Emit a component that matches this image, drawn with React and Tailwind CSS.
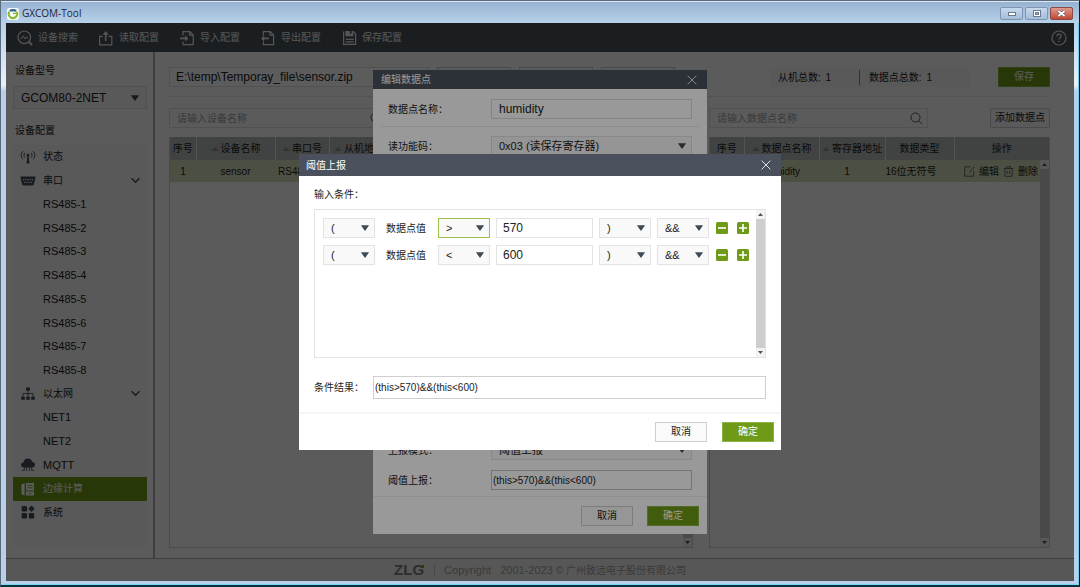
import React from "react";

/* ---------- icons ---------- */

function Svg({ children, size = 16, className = "", sw = 1.2 }) {
  return (
    <svg
      width={size}
      height={size}
      viewBox="0 0 16 16"
      fill="none"
      stroke="currentColor"
      strokeWidth={sw}
      className={"shrink-0 " + className}
      aria-hidden="true"
    >
      {children}
    </svg>
  );
}

const ScanIcon = () => (
  <Svg>
    <circle cx="7.3" cy="7.3" r="6.3" />
    <path d="M12 12l3 3" strokeWidth="1.8" />
    <path d="M3.4 8.2h1.5L6.2 5.8l2 3.2 1.4-2.2 0.6 0.9h1" strokeWidth="1" />
  </Svg>
);
const ReadIcon = () => (
  <Svg>
    <path d="M4.8 6.3H1.6v8.6h12.2V6.3h-3.2" />
    <path d="M7.7 11V2.4" strokeWidth="1.6" />
    <path d="M4.7 4.8L7.7 1l3 3.8z" fill="currentColor" stroke="none" />
  </Svg>
);
const ImportIcon = () => (
  <Svg>
    <path d="M4 5.4V1.6h6.8l3.4 3.4v9.6H4v-3.2" />
    <path d="M10.6 1.6v3.6h3.6" />
    <path d="M1 8.4h6" strokeWidth="1.8" />
    <path d="M6.2 5.4l3.2 3-3.2 3z" fill="currentColor" stroke="none" />
  </Svg>
);
const ExportIcon = () => (
  <Svg>
    <path d="M3.4 5.4V1.6h6.8l3.4 3.4v9.6H3.4v-3.2" />
    <path d="M10 1.6v3.6h3.6" />
    <path d="M3.4 8.4h5.4" strokeWidth="1.8" />
    <path d="M4.2 5.4L1 8.4l3.2 3z" fill="currentColor" stroke="none" />
  </Svg>
);
const SaveIcon = () => (
  <Svg>
    <path d="M2.6 1.6v12.8h12V3.8l-2-2.2" />
    <path d="M4.4 1v5.2h8V1h-1.8v2.8H8.8V1z" fill="currentColor" stroke="none" />
    <path d="M4.8 9.4h8M4.8 11.8h8" />
  </Svg>
);
const HelpIcon = () => (
  <Svg>
    <circle cx="8" cy="8" r="7" />
    <path d="M5.9 6.2c0-2.8 4.3-2.7 4.3-0.2 0 1.5-2.1 1.7-2.1 3.5" />
    <path d="M8.1 10.7v1.4" strokeWidth="1.4" />
  </Svg>
);
const SearchIcon = () => (
  <Svg size={13} sw={1.2} className="text-[#555]">
    <circle cx="6.8" cy="6.8" r="5.6" />
    <path d="M11 11l4 4" />
  </Svg>
);
const CloseIcon = () => (
  <Svg size={10} sw={1.3}>
    <path d="M1 1l14 14M15 1L1 15" />
  </Svg>
);
const StatusIcon = () => (
  <Svg sw={1}>
    <path d="M3 2.2C0.6 4.4 0.6 8 3 10.2M5 3.8C3.6 5 3.6 7.4 5 8.6M13 2.2c2.4 2.2 2.4 5.8 0 8M11 3.8c1.4 1.2 1.4 3.6 0 4.8" />
    <circle cx="8" cy="6.2" r="1.4" fill="currentColor" stroke="none" />
    <path d="M7.4 7h1.2l0.9 7.6h-3z" fill="currentColor" stroke="none" />
  </Svg>
);
const SerialIcon = () => (
  <Svg>
    <path d="M0.6 3.4h14.8v2l-1.6 6.2q-0.3 1-1.4 1H3.6q-1.1 0-1.4-1L0.6 5.4z" fill="currentColor" stroke="none" />
    <path d="M3 6.6h10M4 9.4h8" stroke="#f7f7f7" strokeDasharray="1.2 1" strokeWidth="1.3" />
  </Svg>
);
const NetIcon = () => (
  <Svg>
    <path d="M6 1.6h4v3.2H6zM1.2 10.8h3.6v3H1.2zM6.2 10.8h3.6v3H6.2zM11.2 10.8h3.6v3h-3.6z" fill="currentColor" stroke="none" />
    <path d="M8 4.6v6.4M3 11V7.6h10V11" strokeWidth="0.9" />
  </Svg>
);
const CloudIcon = () => (
  <Svg>
    <path d="M4 10.4C0 10.2 0.2 5.6 3.4 5.4 3.8 0.6 11.4 0 12.2 5c3.6 0 3.8 5.2 0.4 5.4z" fill="currentColor" stroke="none" />
    <path d="M6.6 10v4M9.4 10v4M4.4 10v3.4H1.8M11.6 10v3.4h2.6" strokeWidth="0.8" />
  </Svg>
);
const EdgeIcon = () => (
  <Svg>
    <path d="M1.4 3.6L4.6 2v12.6l-3.2-1.4z" fill="currentColor" stroke="none" />
    <path d="M6 2h8v7.4H6zM6 10.6h8v4H6z" fill="currentColor" stroke="none" />
    <path d="M7.4 4.4h5.2M7.4 6.8h5.2M9 12.6h2" stroke="#6f9a18" strokeWidth="0.9" />
  </Svg>
);
const SystemIcon = () => (
  <Svg>
    <rect x="1.6" y="2" width="5.4" height="5.4" rx="1" fill="currentColor" stroke="none" />
    <rect x="1.6" y="9" width="5.4" height="5.4" rx="1" fill="currentColor" stroke="none" />
    <rect x="8.8" y="9" width="5.4" height="5.4" rx="1" fill="currentColor" stroke="none" />
    <path d="M11.5 1.6l3.2 3.2-3.2 3.2-3.2-3.2z" fill="currentColor" stroke="none" />
  </Svg>
);
const EditIcon = () => (
  <Svg size={11} sw={1.2} className="text-[#555]">
    <path d="M9.5 1.2H1v13.6h13V7" />
    <path d="M14.8 1.2L8 9.5" />
  </Svg>
);
const TrashIcon = () => (
  <Svg size={11} sw={1.2} className="text-[#555]">
    <path d="M1 3.6h14M5.2 3.6V1h5.6v2.6M2.8 3.6v11.4h10.4V3.6M6.4 7v4.6M9.6 7v4.6" />
  </Svg>
);
const Chevron = () => (
  <Svg size={9} sw={2.4} className="ml-auto mr-[7px] text-[#434d57]">
    <path d="M1 4l7 7 7-7" />
  </Svg>
);
const Caret = () => (
  <svg width="8" height="6" viewBox="0 0 8 6" aria-hidden="true">
    <path d="M0.4 0.2h7.2q0.5 0 0.2 0.5L4.4 5.4q-0.4 0.5-0.8 0L0.2 0.7q-0.3-0.5 0.2-0.5z" fill="#3f4a54" />
  </svg>
);
const SortUp = () => (
  <svg width="8" height="4" viewBox="0 0 8 4" className="shrink-0" aria-hidden="true">
    <path d="M0 4L4 0l4 4z" fill="#8a9190" />
  </svg>
);

function AppLogo() {
  return (
    <svg width="12" height="12" viewBox="0 0 12 12" aria-hidden="true">
      <rect width="12" height="12" rx="2" fill="#f4f8fb" />
      <path d="M2.4 3.6A4.2 4.2 0 1 0 9.6 3.8" fill="none" stroke="#8cb82c" strokeWidth="2" />
      <path d="M2.2 2Q6 0 9.8 2L8.6 3.8Q6 2.8 3.6 3.8z" fill="#2f6482" />
      <path d="M6 5.4h3.8" stroke="#8cb82c" strokeWidth="1.3" />
    </svg>
  );
}

/* ---------- controls ---------- */

function Select({ id, label, value, className = "", active = false }) {
  return (
    <div className={"relative h-5 " + className}>
      <select
        id={id}
        aria-label={label}
        defaultValue={value}
        className={
          "block h-full w-full appearance-none border bg-[#f9f9f9] pl-[7px] pr-4 outline-none " +
          (active ? "border-[#9cc04c]" : "border-[#e3e3e3]")
        }
      >
        <option>{value}</option>
      </select>
      <div className="pointer-events-none absolute inset-y-0 right-1.5 flex items-center">
        <Caret />
      </div>
    </div>
  );
}

function Button({ primary = false, className = "", children }) {
  return (
    <button
      type="button"
      className={
        "h-5 shrink-0 border text-[10px] leading-none " +
        (primary ? "border-[#8db344] bg-[#6f9a18] text-white " : "border-[#cfcfcf] bg-[#fafafa] text-[#222] ") +
        className
      }
    >
      {children}
    </button>
  );
}

function ScrollBar() {
  return (
    <div className="flex w-[9px] shrink-0 flex-col bg-[#cecece]">
      <div className="flex h-[9px] items-center justify-center bg-[#f3f3f3]">
        <svg width="5" height="3" viewBox="0 0 5 3"><path d="M0 3L2.5 0 5 3z" fill="#555" /></svg>
      </div>
      <div className="flex-1" />
      <div className="flex h-[9px] items-center justify-center bg-[#f3f3f3]">
        <svg width="5" height="3" viewBox="0 0 5 3"><path d="M0 0L2.5 3 5 0z" fill="#555" /></svg>
      </div>
    </div>
  );
}

function DialogHeader({ title, className }) {
  return (
    <header className={"flex shrink-0 items-center justify-between bg-[#4a515c] text-white " + className}>
      <h2>{title}</h2>
      <button type="button" aria-label="关闭" className="flex">
        <CloseIcon />
      </button>
    </header>
  );
}

/* ---------- page ---------- */

const tools = [
  ["设备搜索", ScanIcon],
  ["读取配置", ReadIcon],
  ["导入配置", ImportIcon],
  ["导出配置", ExportIcon],
  ["保存配置", SaveIcon],
];

const nav = [
  { text: "状态", icon: StatusIcon },
  { text: "串口", icon: SerialIcon, open: true },
  { text: "RS485-1" },
  { text: "RS485-2" },
  { text: "RS485-3" },
  { text: "RS485-4" },
  { text: "RS485-5" },
  { text: "RS485-6" },
  { text: "RS485-7" },
  { text: "RS485-8" },
  { text: "以太网", icon: NetIcon, open: true },
  { text: "NET1" },
  { text: "NET2" },
  { text: "MQTT", icon: CloudIcon },
  { text: "边缘计算", icon: EdgeIcon, current: true },
  { text: "系统", icon: SystemIcon },
];

function Sidebar() {
  return (
    <aside className="flex w-[149px] shrink-0 flex-col border-r-2 border-[#b0b0b0] pb-[10px] pl-[7px] pr-1.5 pt-[13px]">
      <label htmlFor="model" className="pl-0.5 leading-3">设备型号</label>
      <div className="relative mt-[9px] h-[23px]">
        <select
          id="model"
          defaultValue="GCOM80-2NET"
          className="block h-full w-full appearance-none border border-[#e3e3e3] bg-[#f9f9f9] pl-[7px] text-[12px]"
        >
          <option>GCOM80-2NET</option>
        </select>
        <div className="pointer-events-none absolute inset-y-0 right-2 flex items-center">
          <Caret />
        </div>
      </div>
      <h2 className="mt-4 pl-0.5 leading-3">设备配置</h2>
      <nav className="mt-2 grid min-h-0 flex-1 grid-rows-[repeat(17,minmax(0,1fr))] bg-[#f7f7f7]">
        {nav.map(({ text, icon: Icon, open, current }) => (
          <a
            key={text}
            href="#"
            className={
              "flex items-center gap-[7px] pl-[7px] " +
              (current ? "bg-[#6f9a18] text-white" : "text-[#222]") +
              (/^[A-Z]/.test(text) ? " text-[11px]" : "")
            }
          >
            <span className={"flex w-4 " + (current ? "" : "text-[#434d57]")}>{Icon && <Icon />}</span>
            {text}
            {open && <Chevron />}
          </a>
        ))}
      </nav>
    </aside>
  );
}

function SearchBox({ id, placeholder, className = "" }) {
  return (
    <div className={"flex h-5 w-[219px] items-center border border-[#e3e3e3] pl-[7px] pr-1 " + className}>
      <input id={id} aria-label={placeholder} placeholder={placeholder} className="min-w-0 flex-1 outline-none placeholder:text-[#a3a3a3]" />
      <SearchIcon />
    </div>
  );
}

function Th({ children, sort, className = "" }) {
  return (
    <th className={"h-[23px] border-r border-[#e8e8e8] p-0 font-normal last:border-r-0 " + className}>
      <span className="flex items-center justify-center gap-0.5 whitespace-nowrap">
        {sort && <SortUp />}
        {children}
      </span>
    </th>
  );
}

function LeftPanel() {
  return (
    <section className="flex min-w-0 flex-[524] flex-col gap-[9px]">
      <div className="flex items-center justify-between">
        <SearchBox id="find-device" placeholder="请输入设备名称" />
        <Button className="w-[60px]">添加设备</Button>
      </div>
      <div className="flex min-h-0 flex-1 flex-col border border-t-0 border-[#d2d2d2]">
        <table className="w-full table-fixed border-collapse text-center">
          <thead className="bg-[#b4bcba]">
            <tr>
              <Th className="w-[26px]">序号</Th>
              <Th sort className="w-[79px]">设备名称</Th>
              <Th sort className="w-[54px]">串口号</Th>
              <Th sort className="w-[60px]">从机地址</Th>
              <Th>操作</Th>
            </tr>
          </thead>
          <tbody>
            <tr className="h-[22px] bg-[#d3dfb9]">
              <td className="p-0">1</td>
              <td className="p-0">sensor</td>
              <td className="p-0 pl-[3px] text-left">RS485-1</td>
              <td className="p-0">1</td>
              <td className="p-0" />
            </tr>
          </tbody>
        </table>
        <div className="flex min-h-0 flex-1 justify-end">
          <ScrollBar />
        </div>
      </div>
    </section>
  );
}

function RightPanel() {
  return (
    <section className="flex min-w-0 flex-[341] flex-col gap-[9px]">
      <div className="flex items-center justify-between">
        <SearchBox id="find-point" placeholder="请输入数据点名称" />
        <Button className="w-[60px]">添加数据点</Button>
      </div>
      <div className="flex min-h-0 flex-1 flex-col border border-t-0 border-[#d2d2d2]">
        <table className="w-full table-fixed border-collapse text-center">
          <thead className="bg-[#b4bcba]">
            <tr>
              <Th className="w-[34px]">序号</Th>
              <Th sort className="w-[75px]">数据点名称</Th>
              <Th sort className="w-[66px]">寄存器地址</Th>
              <Th className="w-[69px]">数据类型</Th>
              <Th>操作</Th>
            </tr>
          </thead>
        </table>
        <div className="flex min-h-0 flex-1">
          <div className="flex-1">
            <table className="w-full table-fixed border-collapse text-center">
              <tbody>
                <tr className="h-[22px] bg-[#d3dfb9]">
                  <td className="w-[34px] p-0">1</td>
                  <td className="w-[75px] p-0">humidity</td>
                  <td className="w-[56px] p-0">1</td>
                  <td className="w-[72px] p-0">16位无符号</td>
                  <td className="p-0">
                    <span className="flex items-center justify-end gap-1 whitespace-nowrap pr-0.5">
                      <EditIcon />
                      <a href="#">编辑</a>
                      <TrashIcon />
                      <a href="#">删除</a>
                    </span>
                  </td>
                </tr>
              </tbody>
            </table>
          </div>
          <ScrollBar />
        </div>
      </div>
    </section>
  );
}

function Main() {
  return (
    <main className="flex min-w-0 flex-1 flex-col pb-[10px] pl-[14px] pr-6 pt-[15px]">
      <div className="flex gap-2">
        <input
          aria-label="文件路径"
          defaultValue="E:\temp\Temporay_file\sensor.zip"
          className="h-5 w-[260px] border border-[#e3e3e3] bg-white pl-1.5 text-[12px]"
        />
        <Button className="w-[74px]">浏览</Button>
        <Button className="w-[74px]">导入</Button>
        <Button className="w-[74px]">导出</Button>
        <div className="ml-auto mr-5 flex w-[200px] items-center bg-[#f7f7f7] pl-2">
          <span>从机总数: <b className="ml-0.5 font-medium">1</b></span>
          <span className="ml-auto mr-[38px] border-l border-[#888] pl-[9px]">数据点总数: <b className="ml-0.5 font-medium">1</b></span>
        </div>
        <Button primary className="w-[52px]">保存</Button>
      </div>
      <hr className="mb-[11px] mt-[9px] border-[#e6e6e6]" />
      <div className="flex min-h-0 flex-1 gap-4">
        <LeftPanel />
        <RightPanel />
      </div>
    </main>
  );
}

function EditDialog() {
  return (
    <section role="dialog" aria-label="编辑数据点" className="flex h-[464px] w-[334px] flex-col bg-white">
      <DialogHeader title="编辑数据点" className="h-[19px] pl-2 pr-[10px]" />
      <div className="flex flex-1 flex-col px-2 pt-[10px]">
        <div className="flex items-center pl-[7px] pr-[7px]">
          <label htmlFor="point-name" className="w-[103px]">数据点名称：</label>
          <input id="point-name" defaultValue="humidity" className="h-5 min-w-0 flex-1 border border-[#dcdcdc] pl-[7px] text-[12px]" />
        </div>
        <hr className="mb-[9px] mt-[7px] border-[#e8e8e8]" />
        <div className="flex items-center px-[7px]">
          <label htmlFor="read-code" className="w-[103px]">读功能码：</label>
          <Select id="read-code" value="0x03 (读保存寄存器)" className="flex-1 text-[11px]" />
        </div>
        <div className="flex-1" />
        <div className="flex items-center px-[7px]">
          <label htmlFor="report-mode" className="w-[103px]">上报模式：</label>
          <Select id="report-mode" value="阈值上报" className="flex-1 text-[11px]" />
        </div>
        <div className="mb-1.5 mt-[10px] flex items-center px-[7px]">
          <label htmlFor="threshold" className="w-[103px]">阈值上报：</label>
          <input id="threshold" defaultValue="(this>570)&&(this<600)" className="h-5 min-w-0 flex-1 border border-[#c4c4c4] pl-px" />
        </div>
      </div>
      <footer className="flex justify-end gap-[14px] border-t border-[#efefef] pb-2 pl-2 pr-2 pt-[9px]">
        <Button className="w-[52px]">取消</Button>
        <Button primary className="w-[52px]">确定</Button>
      </footer>
    </section>
  );
}

function ConditionRow({ n, op, value, active }) {
  return (
    <div className="flex items-center">
      <Select label={"左括号 " + n} value="(" className="w-[52px] text-[11px]" />
      <label htmlFor={"value-" + n} className="w-[63px] pl-[11px]">数据点值</label>
      <Select label={"比较符 " + n} value={op} active={active} className="w-[52px] text-[11px]" />
      <input id={"value-" + n} defaultValue={value} className="ml-1.5 h-5 w-[97px] border border-[#e3e3e3] pl-1.5 text-[12px]" />
      <Select label={"右括号 " + n} value=")" className="ml-1.5 w-[52px] text-[11px]" />
      <Select label={"连接符 " + n} value="&&" className="ml-1.5 w-[52px] text-[11px]" />
      <button type="button" aria-label="删除条件" className="ml-[7px] flex">
        <svg width="12" height="12" viewBox="0 0 12 12">
          <rect width="12" height="12" rx="1.5" fill="#6f9a18" />
          <path d="M2 6h8" stroke="#fff" strokeWidth="1.6" />
        </svg>
      </button>
      <button type="button" aria-label="添加条件" className="ml-[9px] flex">
        <svg width="12" height="12" viewBox="0 0 12 12">
          <rect width="12" height="12" rx="1.5" fill="#6f9a18" />
          <path d="M2 6h8M6 2v8" stroke="#fff" strokeWidth="1.6" />
        </svg>
      </button>
    </div>
  );
}

function ThresholdDialog() {
  return (
    <section role="dialog" aria-label="阈值上报" className="flex w-[482px] flex-col bg-white">
      <DialogHeader title="阈值上报" className="h-[22px] pl-[7px] pr-[10px]" />
      <div className="px-[15px] pb-[13px] pt-3">
        <p className="leading-[14px]">输入条件：</p>
        <div className="mt-[7px] flex h-[149px] border border-[#e3e3e3]">
          <div className="flex flex-1 flex-col gap-[7px] pl-2 pt-2">
            <ConditionRow n={1} op=">" value="570" active />
            <ConditionRow n={2} op="<" value="600" />
          </div>
          <ScrollBar />
        </div>
        <div className="mt-[18px] flex items-center">
          <label htmlFor="result" className="w-[59px]">条件结果：</label>
          <input id="result" defaultValue="(this>570)&&(this<600)" className="h-[23px] min-w-0 flex-1 border border-[#cfcfcf] pl-px" />
        </div>
      </div>
      <footer className="flex justify-end gap-[15px] border-t-2 border-[#f6f6f6] pb-2 pr-[7px] pt-2">
        <Button className="w-[52px]">取消</Button>
        <Button primary className="w-[52px]">确定</Button>
      </footer>
    </section>
  );
}

const capBtn = "flex h-[13px] w-[23px] items-center justify-center rounded-[2px] border ";
const capBlue = capBtn + "border-[#7f96b2] bg-linear-to-b from-[#c8d9ec] to-[#a3bddb]";

export default function App() {
  return (
    <div className="flex h-screen flex-col overflow-hidden border-x border-b-2 border-t border-b-[#06323d] border-l-[#5c6b7c] border-r-[#06222d] border-t-[#5c6b7c] bg-[#b9d0ea] font-['Liberation_Sans','Noto_Sans_CJK_SC',sans-serif] text-[10px] text-[#222]">
      <div className="flex h-[22px] shrink-0 items-center gap-[3px] border-t border-[#dce8f4] bg-linear-to-b from-[#98b3d2] to-[#b7d1ea] pl-1.5 pr-1.5 pt-0.5">
        <AppLogo />
        <h1 className="mr-auto font-['Open_Sans',sans-serif] text-[10px] text-[#1c2733]">GXCOM-Tool</h1>
        <div className="flex gap-0.5">
          <button type="button" aria-label="最小化" className={capBlue}>
            <svg width="8" height="4" viewBox="0 0 8 4"><rect x="0.5" y="0.5" width="7" height="3" fill="#fff" stroke="#6b7a8c" /></svg>
          </button>
          <button type="button" aria-label="最大化" className={capBlue}>
            <svg width="8" height="7" viewBox="0 0 8 7"><rect x="0.5" y="0.5" width="7" height="6" fill="#fff" stroke="#6b7a8c" /><rect x="2.5" y="2.5" width="3" height="2" fill="#9ab4d2" stroke="#6b7a8c" /></svg>
          </button>
          <button type="button" aria-label="关闭窗口" className={capBtn + "border-[#8a4a46] bg-linear-to-b from-[#dd9a8e] to-[#c3452f]"}>
            <svg width="9" height="7" viewBox="0 0 9 7"><path d="M1.2 0.8l6.6 5.4M7.8 0.8L1.2 6.2" stroke="#6a5660" strokeWidth="2.8" /><path d="M1.4 1l6.2 5M7.6 1L1.4 6" stroke="#fff" strokeWidth="1.7" /></svg>
          </button>
        </div>
      </div>
      <div className="flex min-h-0 flex-1 border-b border-r border-b-[#7ad6ee] border-r-[#6fd0ee] bg-linear-to-b from-[#b7d1ea] via-[#eaf2fa] via-[62px] to-[#b9d0ea] to-[68px] pb-[3px] pl-[5px] pr-1">
        <div className="relative flex min-w-0 flex-1 flex-col bg-[#fdfdfd]">
          <div className="flex h-[29px] shrink-0 items-center gap-5 bg-[#4a555d] pl-[11px] pr-[7px] text-[#efefef]">
            {tools.map(([text, Icon]) => (
              <button type="button" key={text} className="flex items-center gap-[5px]">
                <Icon />
                {text}
              </button>
            ))}
            <button type="button" aria-label="帮助" className="ml-auto">
              <HelpIcon />
            </button>
          </div>
          <div className="flex min-h-0 flex-1">
            <Sidebar />
            <Main />
          </div>
          <footer className="flex h-[23px] shrink-0 items-center justify-center border-t border-[#b0b0b0] bg-[#f4f4f4] text-[#a0a0a0]">
            <span className="relative text-[15px] font-bold text-[#808080]">
              ZLG
              <i className="absolute right-0 top-1.5 size-[3px] bg-[#6fae18]" />
            </span>
            <span className="ml-[10px] h-3 border-l border-[#ccc] pl-[9px] text-[11px] leading-3">Copyright</span>
            <span className="ml-[9px] text-[11px]">2001-2023</span>
            <span className="ml-[3px]">© 广州致远电子股份有限公司</span>
          </footer>

          <div className="absolute inset-0 flex items-center justify-center bg-black/40">
            <EditDialog />
          </div>
          <div className="absolute inset-0 flex items-center justify-center bg-black/40">
            <ThresholdDialog />
          </div>
        </div>
      </div>
    </div>
  );
}
